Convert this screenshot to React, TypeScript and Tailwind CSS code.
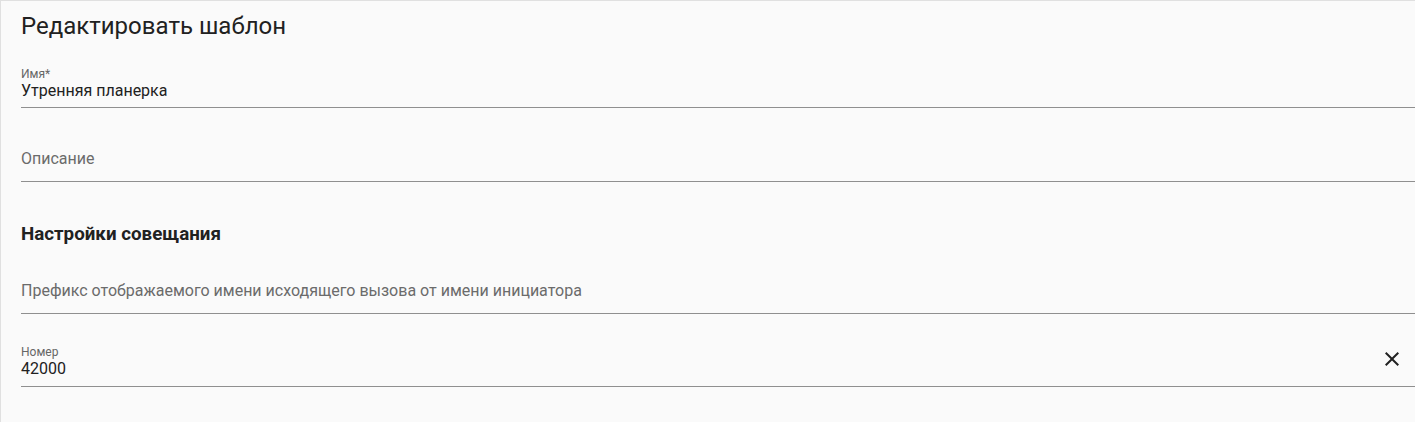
import React from 'react';

const CloseIcon = () => (
  <svg viewBox="0 0 24 24" width={24} height={24} className="fill-[#212121]">
    <path d="M19 6.41 17.59 5 12 10.59 6.41 5 5 6.41 10.59 12 5 17.59 6.41 19 12 13.41 17.59 19 19 17.59 13.41 12z" />
  </svg>
);

export default function App() {
  return (
    <div className="min-h-screen bg-[#fafafa] border-l border-t border-[#e0e0e0] font-['Roboto',sans-serif] text-[#212121]">
      <div className="pl-5">
        {/* Title */}
        <h1 className="pt-[9px] text-[24px] leading-[32px] font-normal">Редактировать шаблон</h1>

        {/* Name field */}
        <div className="mt-[25px] border-b border-[#8f8f8f] pb-[6px]">
          <div className="text-[12px] leading-[14px] text-[#666666]">Имя*</div>
          <div className="text-[16px] leading-[20px]">Утренняя планерка</div>
        </div>

        {/* Description field */}
        <div className="border-b border-[#8f8f8f] pt-[41px] pb-[12px]">
          <div className="text-[16px] leading-[20px] text-[#6b6b6b]">Описание</div>
        </div>

        {/* Section heading */}
        <h2 className="mt-[40px] text-[18.75px] leading-[24px] font-bold">Настройки совещания</h2>

        {/* Prefix field */}
        <div className="border-b border-[#8f8f8f] pt-[35px] pb-[12px]">
          <div className="text-[16px] leading-[20px] text-[#6b6b6b]">
            Префикс отображаемого имени исходящего вызова от имени инициатора
          </div>
        </div>

        {/* Number field */}
        <div className="flex items-start border-b border-[#8f8f8f] pt-[31px] pb-[8px]">
          <div className="flex-1">
            <div className="text-[12px] leading-[14px] text-[#666666]">Номер</div>
            <div className="mt-[1px] text-[16px] leading-[18px]">42000</div>
          </div>
          <div className="mt-[2px] mr-[11px]">
            <CloseIcon />
          </div>
        </div>
      </div>
    </div>
  );
}
